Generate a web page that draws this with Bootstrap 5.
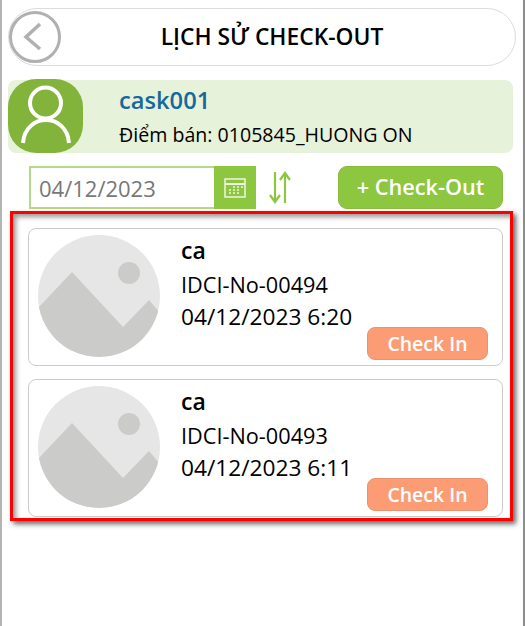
<!DOCTYPE html>
<html lang="vi">
<head>
    <meta charset="UTF-8">
    <meta name="viewport" content="width=device-width, initial-scale=1.0">
    <title>Lịch sử Check-Out</title>
    <link rel="stylesheet" href="https://cdn.jsdelivr.net/npm/bootstrap@5.3.0/dist/css/bootstrap.min.css">
    <style>
        body {
            font-family: "Open Sans", "Noto Sans", sans-serif;
            color: #000;
            min-height: 626px;
            border-left: 2px solid #b4b4b4;
            border-right: 2px solid #8c8c8c;
            padding: 8px 7px 0 6px;
        }
        .top-bar {
            height: 58px;
            border: 1px solid #dcdcdc;
            border-radius: 29px;
        }
        .back-btn { width: 52px; height: 52px; flex-shrink: 0; }
        .back-spacer { width: 32px; flex-shrink: 0; }
        .page-title {
            font-size: 22.8px;
            font-weight: 600;
            line-height: 30px;
            margin: 0 0 1px 0;
        }
        .user-panel {
            height: 73px;
            margin: 14px 3px 0 0;
            background: #e6f2da;
            border-radius: 8px;
        }
        .user-avatar {
            width: 75px;
            height: 74px;
            flex-shrink: 0;
            margin-top: -1px;
            background: #82b43c;
            border-radius: 28px;
        }
        .user-info { padding-left: 36px; }
        .user-name { font-size: 23.7px; font-weight: 600; color: #17689b; line-height: 30px; margin-top: 5px; }
        .user-shop { font-size: 19.6px; line-height: 26px; margin-top: 7px; }
        .tool-row { margin: 13px 13px 0 21px; height: 43px; }
        .date-box {
            width: 227px;
            height: 43px;
            border: 2px solid #b5d98a;
        }
        .date-text { font-size: 22px; color: #777; padding-left: 8px; line-height: 40px; }
        .date-btn { width: 42px; background: #8dc63f; margin: -2px -2px -2px 0; }
        .sort-icon { margin-left: 13px; }
        .add-btn {
            width: 165px;
            height: 43px;
            padding: 0 0 0 0;
            background: #8dc63f;
            border: 1px solid #86bb3d;
            border-radius: 9px;
            color: #fff;
            font-size: 21.7px;
            font-weight: 600;
        }
        .red-frame {
            margin: 2px 0 0 2px;
            padding: 14px 7px 1px 15px;
            border: 3px solid #f00;
            box-shadow: 3px 3px 5px #666, inset 3px 3px 5px #999;
            width: 503px;
        }
        .item-card {
            height: 138px;
            border: 1px solid #ccc;
            border-radius: 8px;
            padding: 6px 14px 0 9px;
            margin-bottom: 13px;
        }
        .item-card:last-child { margin-bottom: 0; }
        .item-pic { width: 122px; height: 122px; flex-shrink: 0; }
        .item-text { padding-left: 21px; line-height: 32px; }
        .item-name { font-size: 23px; font-weight: 600; line-height: 30px; margin-bottom: 4px; }
        .item-code { font-size: 21.7px; }
        .item-time { font-size: 22.7px; }
        .checkin-btn {
            width: 121px;
            height: 33px;
            padding: 0;
            margin-bottom: 5px;
            background: #fc9c75;
            border: 1px solid #ec9270;
            border-radius: 8px;
            color: #fff;
            font-size: 19.5px;
            font-weight: 600;
            line-height: 30px;
        }
    </style>
</head>
<body>
    <div class="top-bar d-flex align-items-center">
        <svg class="back-btn" viewBox="0 0 52 52" fill="none" stroke="#b0b0b0">
            <circle cx="26" cy="26" r="24.5" stroke-width="3"/>
            <path d="M31 13 L17 26 L31 38" stroke-width="3.5"/>
        </svg>
        <h1 class="page-title flex-grow-1 text-center">LỊCH SỬ CHECK-OUT</h1>
        <div class="back-spacer"></div>
    </div>

    <div class="user-panel d-flex">
        <div class="user-avatar">
            <svg width="75" height="74" viewBox="0 0 75 74" fill="none" stroke="#fff" stroke-width="4">
                <circle cx="37.5" cy="24" r="15.5"/>
                <path d="M15 64 C16 49 27 41 38 41 C49 41 60 49 61 64"/>
            </svg>
        </div>
        <div class="user-info">
            <div class="user-name">cask001</div>
            <div class="user-shop">Điểm bán: 0105845_HUONG ON</div>
        </div>
    </div>

    <div class="tool-row d-flex align-items-start">
        <div class="date-box d-flex justify-content-between">
            <span class="date-text">04/12/2023</span>
            <span class="date-btn d-flex align-items-center justify-content-center">
                <svg width="22" height="20" viewBox="0 0 22 20" fill="none" stroke="#eef6e0">
                    <rect x="1" y="1" width="20" height="18" stroke-width="1.5"/>
                    <path d="M1 6 H21" stroke-width="2"/>
                    <path d="M9 9h2M13 9h2M17 9h2M5 12h2M9 12h2M13 12h2M5 15h2M9 15h2M13 15h2" stroke-width="1.6"/>
                </svg>
            </span>
        </div>
        <svg class="sort-icon" width="22" height="43" viewBox="0 0 22 43" fill="none" stroke="#8dc63f" stroke-width="2.2">
            <path d="M6 6 V36 M1 29 L6 36 L11 29"/>
            <path d="M16 37 V7 M11 14 L16 7 L21 14"/>
        </svg>
        <button type="button" class="btn add-btn ms-auto">+ Check-Out</button>
    </div>

    <div class="red-frame">
        <div class="item-card d-flex">
            <svg class="item-pic" viewBox="0 0 122 122">
                <use href="#pic-shape"/>
            </svg>
            <div class="item-text">
                <div class="item-name">ca</div>
                <div class="item-code">IDCI-No-00494</div>
                <div class="item-time">04/12/2023 6:20</div>
            </div>
            <button type="button" class="btn checkin-btn ms-auto align-self-end">Check In</button>
        </div>
        <div class="item-card d-flex">
            <svg class="item-pic" viewBox="0 0 122 122">
                <use href="#pic-shape"/>
            </svg>
            <div class="item-text">
                <div class="item-name">ca</div>
                <div class="item-code">IDCI-No-00493</div>
                <div class="item-time">04/12/2023 6:11</div>
            </div>
            <button type="button" class="btn checkin-btn ms-auto align-self-end">Check In</button>
        </div>
    </div>

    <svg width="0" height="0" class="d-block">
        <defs>
            <clipPath id="pic-clip"><circle cx="61" cy="61" r="61"/></clipPath>
            <g id="pic-shape">
                <circle cx="61" cy="61" r="61" fill="#e6e6e6"/>
                <circle cx="91" cy="38" r="11" fill="#cbcbca"/>
                <path d="M0 73 L34 37 L85 92 L111 65 L122 78 V122 H0 Z" fill="#cbcbca" clip-path="url(#pic-clip)"/>
            </g>
        </defs>
    </svg>

    <script src="https://cdn.jsdelivr.net/npm/bootstrap@5.3.0/dist/js/bootstrap.bundle.min.js"></script>
</body>
</html>
